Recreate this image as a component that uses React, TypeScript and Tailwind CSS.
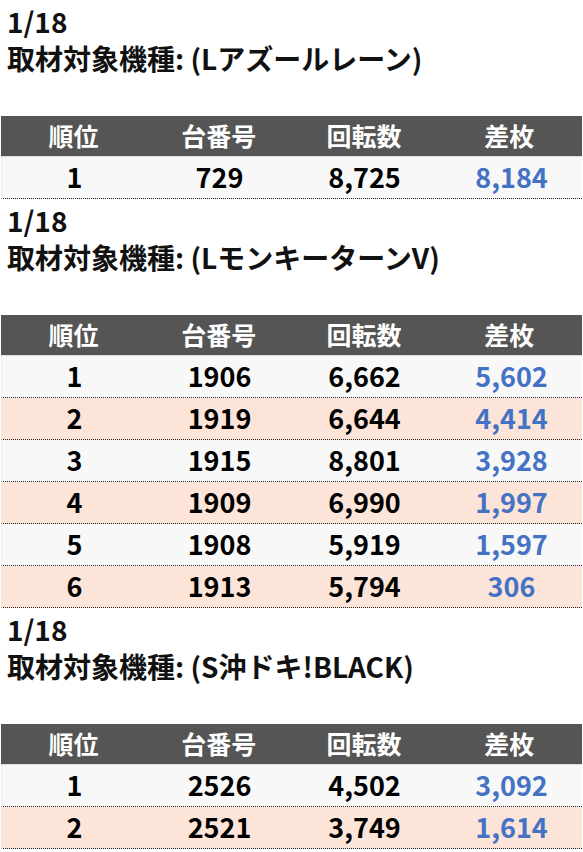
const sections = [
  {
    machine: "(Lアズールレーン)",
    rows: [["1", "729", "8,725", "8,184"]],
  },
  {
    machine: "(LモンキーターンV)",
    rows: [
      ["1", "1906", "6,662", "5,602"],
      ["2", "1919", "6,644", "4,414"],
      ["3", "1915", "8,801", "3,928"],
      ["4", "1909", "6,990", "1,997"],
      ["5", "1908", "5,919", "1,597"],
      ["6", "1913", "5,794", "306"],
    ],
  },
  {
    machine: "(S沖ドキ!BLACK)",
    rows: [
      ["1", "2526", "4,502", "3,092"],
      ["2", "2521", "3,749", "1,614"],
    ],
  },
];

const headers = ["順位", "台番号", "回転数", "差枚"];

function RankTable({ rows }: { rows: string[][] }) {
  return (
    <div className="mx-[1px]">
      <div className="grid grid-cols-4 h-[41px] items-center bg-[#555555] border-b border-[#dcdcdc] text-white text-[25px]">
        {headers.map((h) => (
          <div key={h} className="text-center">
            {h}
          </div>
        ))}
      </div>
      {rows.map((r, i) => (
        <div
          key={i}
          className={`grid grid-cols-4 h-[42px] items-center border-b border-dotted border-[#222] border-l border-l-[#e6e6e6] text-[27px] ${
            i % 2 === 0 ? "bg-[#f8f8f8]" : "bg-[#fce4d8]"
          }`}
        >
          <div className="text-center text-black">{r[0]}</div>
          <div className="text-center text-black">{r[1]}</div>
          <div className="text-center text-black">{r[2]}</div>
          <div className="text-center text-[#4472c4] pl-[4px]">{r[3]}</div>
        </div>
      ))}
    </div>
  );
}

export default function App() {
  return (
    <div
      className="w-[583px] bg-white font-bold text-[#111]"
      style={{ fontFamily: '"Noto Sans CJK JP", "Noto Sans", sans-serif' }}
    >
      {sections.map((s, i) => (
        <div key={i}>
          <div className="h-[116px] px-[7px] pt-[3px] text-[28px] leading-[37px]">
            <div>1/18</div>
            <div>取材対象機種: {s.machine}</div>
          </div>
          <RankTable rows={s.rows} />
        </div>
      ))}
    </div>
  );
}
